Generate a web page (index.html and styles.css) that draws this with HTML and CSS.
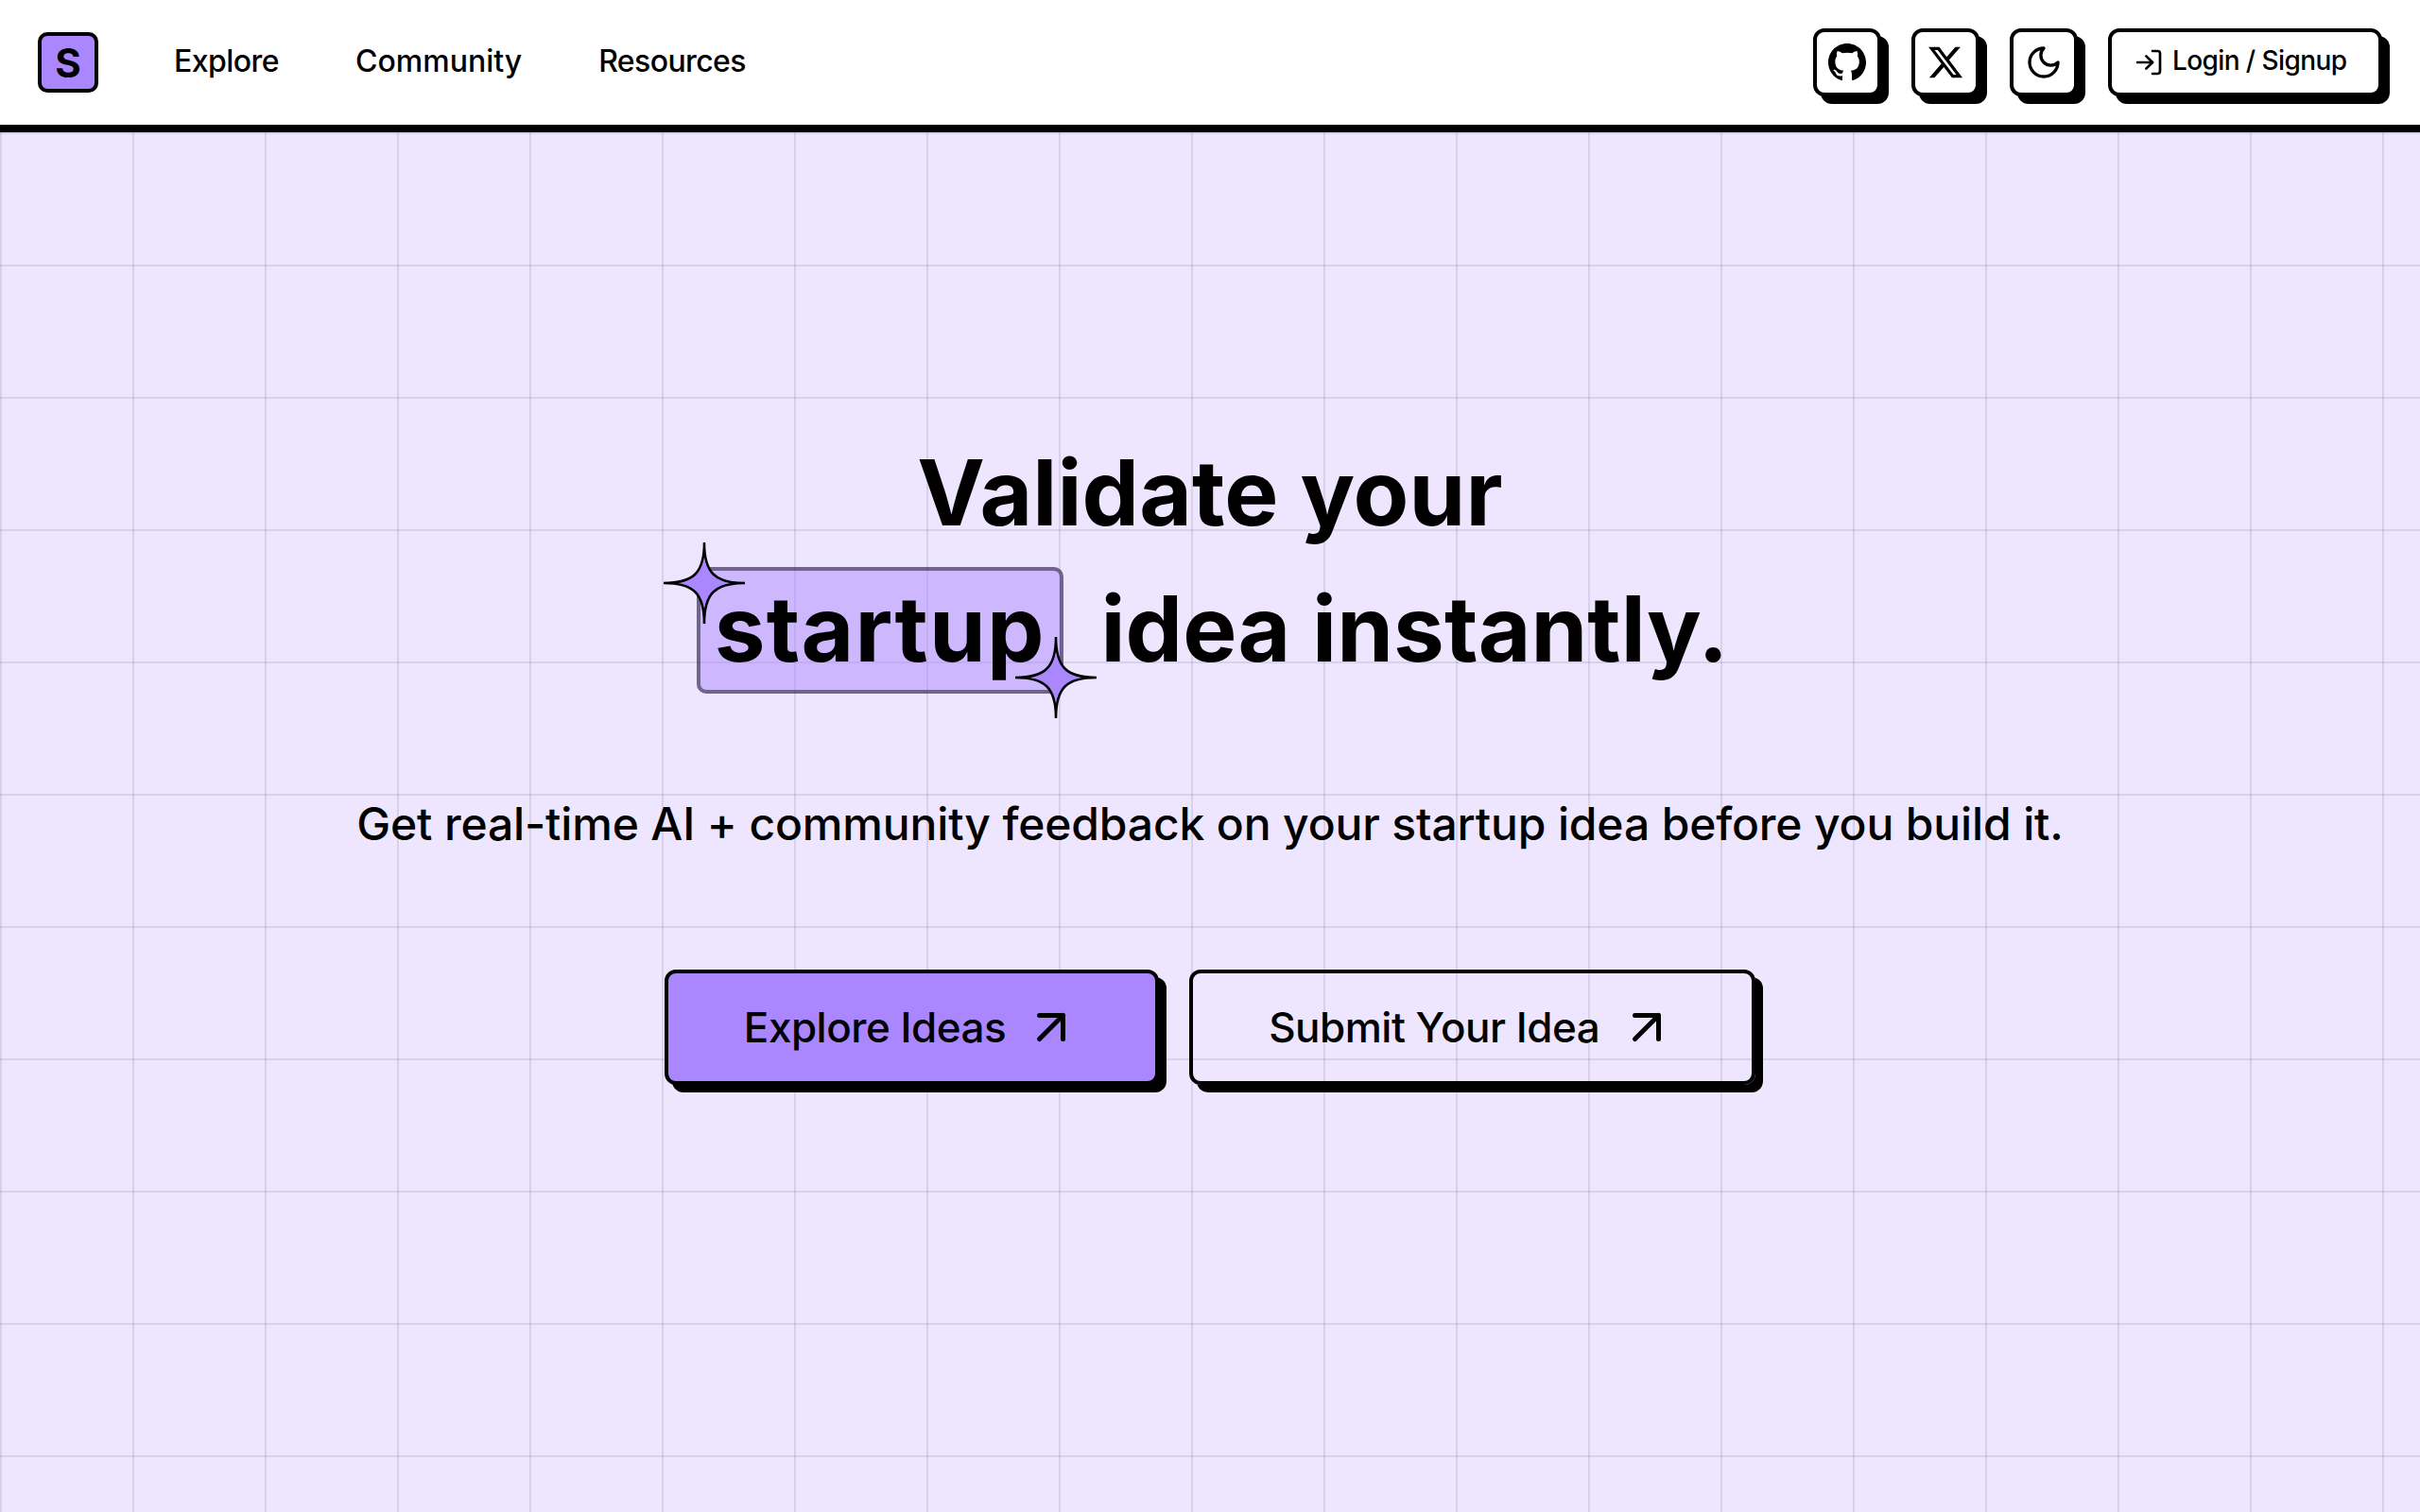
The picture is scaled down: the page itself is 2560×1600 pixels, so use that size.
FILE: index.html
```html
<!DOCTYPE html>
<html lang="en">
<head>
<meta charset="utf-8">
<title>Validate your startup idea</title>
<link rel="stylesheet" href="styles.css">
</head>
<body>
<nav class="nav">
  <div class="nav-left">
    <a class="logo">S</a>
    <div class="links">
      <a class="link link-explore">Explore</a>
      <a class="link link-community">Community</a>
      <a class="link link-resources">Resources</a>
    </div>
  </div>
  <div class="nav-right">
    <a class="icon-btn">
      <svg class="ic-github" viewBox="0 0 16 16"><path fill="currentColor" d="M8 0C3.58 0 0 3.58 0 8c0 3.54 2.29 6.53 5.47 7.59.4.07.55-.17.55-.38 0-.19-.01-.82-.01-1.49-2.01.37-2.53-.49-2.69-.94-.09-.23-.48-.94-.82-1.13-.28-.15-.68-.52-.01-.53.63-.01 1.08.58 1.23.82.72 1.21 1.87.87 2.33.66.07-.52.28-.87.51-1.07-1.78-.2-3.64-.89-3.64-3.95 0-.87.31-1.59.82-2.15-.08-.2-.36-1.02.08-2.12 0 0 .67-.21 2.2.82.64-.18 1.32-.27 2-.27.68 0 1.36.09 2 .27 1.53-1.04 2.2-.82 2.2-.82.44 1.1.16 1.92.08 2.12.51.56.82 1.27.82 2.15 0 3.07-1.87 3.75-3.65 3.95.29.25.54.73.54 1.48 0 1.07-.01 1.93-.01 2.2 0 .21.15.46.55.38A8.013 8.013 0 0016 8c0-4.42-3.58-8-8-8z"/></svg>
    </a>
    <a class="icon-btn">
      <svg class="ic-x" viewBox="0 0 24 24"><path fill="currentColor" d="M18.244 2.25h3.308l-7.227 8.26 8.502 11.24H16.17l-5.214-6.817L4.99 21.75H1.68l7.73-8.835L1.254 2.25H8.08l4.713 6.231zm-1.161 17.52h1.833L7.084 4.126H5.117z"/></svg>
    </a>
    <a class="icon-btn">
      <svg class="ic-moon" viewBox="0 0 24 24"><path d="M12 3a6 6 0 0 0 9 9 9 9 0 1 1-9-9Z"/></svg>
    </a>
    <a class="login-btn">
      <svg class="ic-login" viewBox="0 0 24 24"><path d="M15 3h4a2 2 0 0 1 2 2v14a2 2 0 0 1-2 2h-4"/><path d="M10 17l5-5-5-5"/><path d="M15 12H3"/></svg>
      <span class="login-text">Login / Signup</span>
    </a>
  </div>
</nav>
<main class="hero">
  <h1 class="title">
    <span class="title-line">Validate your</span>
    <span class="title-line title-line-second"><span class="mark">startup<svg class="star star-a" viewBox="0 0 90 90"><path d="M45 2C45 34 56 45 88 45C56 45 45 56 45 88C45 56 34 45 2 45C34 45 45 34 45 2Z"/></svg><svg class="star star-b" viewBox="0 0 90 90"><path d="M45 2C45 34 56 45 88 45C56 45 45 56 45 88C45 56 34 45 2 45C34 45 45 34 45 2Z"/></svg></span> idea instantly.</span>
  </h1>
  <p class="subtitle">Get real-time AI + community feedback on your startup idea before you build it.</p>
  <div class="actions">
    <a class="cta cta-primary">
      <span>Explore Ideas</span>
      <svg class="ic-arrow" viewBox="0 0 24 24"><path d="M7 7h10v10"/><path d="M7 17 17 7"/></svg>
    </a>
    <a class="cta cta-secondary">
      <span>Submit Your Idea</span>
      <svg class="ic-arrow" viewBox="0 0 24 24"><path d="M7 7h10v10"/><path d="M7 17 17 7"/></svg>
    </a>
  </div>
</main>
</body>
</html>
```
FILE: styles.css
```css
* { box-sizing: border-box; }
html, body { margin: 0; height: 100%; }
body {
  font-family: Inter, "Liberation Sans", sans-serif;
  color: #000;
  background: #eee6ff;
  display: flex;
  flex-direction: column;
  min-height: 1600px;
}
.nav {
  height: 140px;
  flex: none;
  background: #fff;
  border-bottom: 8px solid #000;
  padding: 0 40px;
  display: flex;
  align-items: center;
  justify-content: space-between;
}
.nav-left, .nav-right, .links { display: flex; align-items: center; }
.nav-left { gap: 80px; }
.links { gap: 81px; }
.nav-right { gap: 32px; }
.logo {
  width: 64px;
  height: 64px;
  border: 4px solid #000;
  border-radius: 10px;
  background: #ab87ff;
  display: flex;
  align-items: center;
  justify-content: center;
  font-size: 42px;
  font-weight: 700;
}
.link { font-size: 32px; font-weight: 450; padding-bottom: 4px; }
.link-explore { letter-spacing: -0.55px; }
.link-community { letter-spacing: 0; }
.link-resources { letter-spacing: -0.6px; }
.icon-btn, .login-btn {
  height: 72px;
  background: #fff;
  border: 4px solid #000;
  border-radius: 12px;
  box-shadow: 8px 8px 0 #000;
  display: flex;
  align-items: center;
}
.icon-btn { width: 72px; justify-content: center; }
.login-btn {
  width: 290px;
  padding-left: 23px;
  gap: 9px;
  font-size: 28px;
  font-weight: 450;
  letter-spacing: -0.6px;
}
.login-text { padding-bottom: 4px; }
.ic-github { width: 40px; height: 40px; }
.ic-x { width: 40px; height: 40px; }
.ic-moon { width: 40px; height: 40px; fill: none; stroke: currentColor; stroke-width: 2; stroke-linecap: round; stroke-linejoin: round; }
.ic-login { width: 32px; height: 32px; fill: none; stroke: currentColor; stroke-width: 2; stroke-linecap: round; stroke-linejoin: round; }
.hero {
  flex: 1;
  padding-top: 309px;
  display: flex;
  flex-direction: column;
  align-items: center;
  background-image:
    linear-gradient(to right, rgba(0, 0, 0, 0.09) 2px, transparent 2px),
    linear-gradient(to bottom, rgba(0, 0, 0, 0.09) 2px, transparent 2px);
  background-size: 140px 140px;
}
.title {
  margin: 0;
  font-size: 96px;
  font-weight: 700;
  line-height: 144px;
  letter-spacing: 0.1px;
  text-align: center;
}
.title-line { display: block; }
.title-line-second { padding-left: 5px; }
.mark {
  position: relative;
  display: inline-block;
  padding: 0 15px 4px;
  margin-right: 17px;
  line-height: 122px;
  letter-spacing: 1.2px;
  border: 4px solid rgba(0, 0, 0, 0.45);
  border-radius: 10px;
  background: rgba(171, 135, 255, 0.5);
}
.star {
  position: absolute;
  width: 90px;
  height: 90px;
  fill: #ab87ff;
  stroke: #000;
  stroke-width: 2.5;
  stroke-linejoin: miter;
}
.star-a { left: -41px; top: -32px; }
.star-b { left: 331px; top: 68px; }
.subtitle {
  margin: 99px 0 0;
  font-size: 48px;
  font-weight: 450;
  line-height: 72px;
  letter-spacing: -0.145px;
}
.actions {
  margin-top: 118px;
  display: flex;
  gap: 32px;
}
.cta {
  height: 122px;
  padding: 0 80px;
  border: 4px solid #000;
  border-radius: 12px;
  box-shadow: 8px 8px 0 #000;
  display: flex;
  align-items: center;
  gap: 20px;
  font-size: 44px;
  font-weight: 450;
  letter-spacing: -0.5px;
}
.cta-primary { background: #ab87ff; gap: 18px; }
.cta-secondary { background: transparent; padding-right: 81px; }
.ic-arrow { width: 60px; height: 60px; fill: none; stroke: currentColor; stroke-width: 2; stroke-linecap: round; stroke-linejoin: round; }
```
